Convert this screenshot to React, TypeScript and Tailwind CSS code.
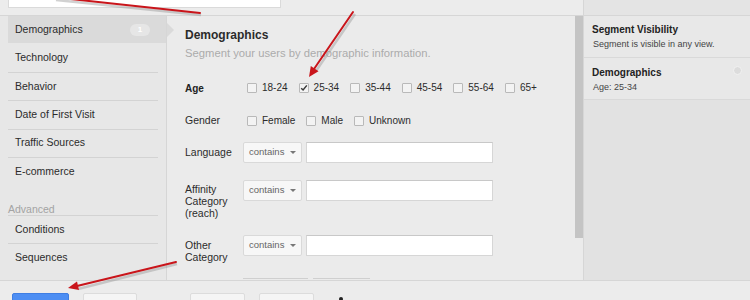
import React from "react";

const Checkbox = ({ checked = false }: { checked?: boolean }) => (
  <span className="relative inline-block w-[10px] h-[10px] shrink-0 rounded-[1px] border border-[#b9b9b9] bg-[#f3f3f3]">
    {checked && (
      <svg className="absolute left-[0px] top-[0px]" width="8" height="8" viewBox="0 0 8 8">
        <path d="M1.2 4.2 L3.1 6 L6.8 1.4" stroke="#3a3a3a" strokeWidth="1.5" fill="none" />
      </svg>
    )}
  </span>
);

const CheckItem = ({ label, checked = false }: { label: string; checked?: boolean }) => (
  <div className="flex items-center gap-[5px]">
    <Checkbox checked={checked} />
    <span className="text-[10px] leading-[14px] text-[#2b2b2b]">{label}</span>
  </div>
);

const SelectBox = () => (
  <div className="flex items-center justify-between w-[59px] h-[21px] rounded-[2px] border border-[#d9d9d9] bg-[#f7f7f7] pl-[5px] pr-[5px] shrink-0">
    <span className="text-[9.5px] text-[#666]">contains</span>
    <span className="w-0 h-0 border-l-[3px] border-r-[3px] border-t-[3px] border-l-transparent border-r-transparent border-t-[#777]" />
  </div>
);

const TextInput = () => (
  <div className="w-[187px] h-[21px] bg-white border border-[#d6d6d6] border-t-[#c8c8c8] shrink-0" />
);

const SideRow = ({ label, selected = false, badge }: { label: string; selected?: boolean; badge?: string }) => (
  <div className={`flex items-center justify-between h-[27.4px] pl-[7px] pr-[16px] ${selected ? "bg-[#dadada]" : ""}`}>
    <span className="text-[10.5px] text-[#2b2b2b]">{label}</span>
    {badge && (
      <span className="flex items-center justify-center w-[20px] h-[12px] rounded-full bg-[#e6e6e6] text-[8px] font-bold text-white">
        {badge}
      </span>
    )}
  </div>
);

const Sep = () => <div className="h-px bg-[#d3d3d3] mr-2" />;

export default function App() {
  return (
    <div className="relative w-[750px] h-[300px] overflow-hidden bg-[#ebebeb] font-['Liberation_Sans',Arial,sans-serif]">
      <div className="flex h-[280px]">
        {/* left area */}
        <div className="flex flex-col w-[583px]">
          <div className="h-[16px] bg-[#ececec] border-b border-[#d6d6d6] pl-2">
            <div className="w-[273px] h-[8px] bg-white border-x border-b border-[#dadada]" />
          </div>
          <div className="flex flex-1 min-h-0">
            {/* sidebar */}
            <div className="w-[167px] pl-2 bg-[#e7e7e7] border-r border-[#d6d6d6]">
              <SideRow label="Demographics" selected badge="1" />
              <div className="h-px" />
              <SideRow label="Technology" />
              <Sep />
              <SideRow label="Behavior" />
              <Sep />
              <SideRow label="Date of First Visit" />
              <Sep />
              <SideRow label="Traffic Sources" />
              <Sep />
              <SideRow label="E-commerce" />
              <div className="flex items-end h-[29.6px]">
                <span className="text-[10.5px] leading-[12px] text-[#a3a3a3]">Advanced</span>
              </div>
              <Sep />
              <SideRow label="Conditions" />
              <Sep />
              <SideRow label="Sequences" />
            </div>
            {/* main */}
            <div className="relative flex-1 bg-[#ebebeb] pl-[18px] pt-[12px]">
              <span className="absolute left-0 top-[7px] w-0 h-0 border-t-[7px] border-b-[7px] border-l-[7px] border-t-transparent border-b-transparent border-l-[#dadada]" />
              <div className="text-[12px] leading-[15px] font-bold text-[#2b2b2b]">Demographics</div>
              <div className="mt-[3px] text-[11.25px] leading-[14px] text-[#ababab]">
                Segment your users by demographic information.
              </div>
              <div className="flex items-center mt-[21px] h-[14px]">
                <span className="w-[62px] text-[10px] font-bold text-[#222]">Age</span>
                <div className="flex items-center gap-[11px]">
                  <CheckItem label="18-24" />
                  <CheckItem label="25-34" checked />
                  <CheckItem label="35-44" />
                  <CheckItem label="45-54" />
                  <CheckItem label="55-64" />
                  <CheckItem label="65+" />
                </div>
              </div>
              <div className="flex items-center mt-[19px] h-[14px]">
                <span className="w-[62px] text-[10.5px] text-[#2b2b2b]">Gender</span>
                <div className="flex items-center gap-[11px]">
                  <CheckItem label="Female" />
                  <CheckItem label="Male" />
                  <CheckItem label="Unknown" />
                </div>
              </div>
              <div className="flex items-center mt-[14px]">
                <span className="w-[58px] text-[10.5px] text-[#2b2b2b]">Language</span>
                <div className="flex gap-[4px]">
                  <SelectBox />
                  <TextInput />
                </div>
              </div>
              <div className="flex items-start mt-[17px]">
                <span className="w-[58px] mt-[3px] text-[10.5px] leading-[12px] text-[#2b2b2b]">
                  Affinity
                  <br />
                  Category
                  <br />
                  (reach)
                </span>
                <div className="flex gap-[4px]">
                  <SelectBox />
                  <TextInput />
                </div>
              </div>
              <div className="flex items-start mt-[16px]">
                <span className="w-[58px] mt-[4px] text-[10.5px] leading-[12px] text-[#2b2b2b]">
                  Other
                  <br />
                  Category
                </span>
                <div className="flex gap-[4px]">
                  <SelectBox />
                  <TextInput />
                </div>
              </div>
              <div className="flex gap-[5px] mt-[15px] ml-[58px]">
                <div className="w-[65px] h-[21px] border-t border-[#cfcfcf]" />
                <div className="w-[57px] h-[21px] border-t border-[#cfcfcf]" />
              </div>
            </div>
            {/* scrollbar */}
            <div className="w-[8px] bg-[#ebebeb]">
              <div className="h-[222px] bg-[#c4c4c4]" />
            </div>
          </div>
        </div>
        {/* right panel */}
        <div className="flex-1 flex flex-col bg-[#e2e2e2] border-l border-[#d6d6d6]">
          <div className="h-[16px] bg-[#e4e4e4] border-b border-[#d6d6d6]" />
          <div className="h-[42px] bg-[#e8e8e8] border-b border-[#d9d9d9] pl-2 pt-[7px]">
            <div className="text-[10px] leading-[14px] font-bold text-[#222]">Segment Visibility</div>
            <div className="text-[9px] leading-[14px] text-[#444] pl-px">Segment is visible in any view.</div>
          </div>
          <div className="relative h-[42px] bg-[#e8e8e8] border-b border-[#d9d9d9] pl-2 pt-[8px]">
            <div className="text-[10px] leading-[14px] font-bold text-[#222]">Demographics</div>
            <div className="text-[9px] leading-[14px] text-[#444] pl-px">Age: 25-34</div>
            <span className="absolute right-[8px] top-[8px] w-[9px] h-[9px] rounded-full bg-[#dcdcdc] border border-[#f2f2f2]" />
          </div>
        </div>
      </div>
      {/* bottom bar */}
      <div className="relative h-[20px] bg-[#ececec] border-t border-[#d6d6d6] flex items-start pt-[12px] pl-[12px]">
        <div className="w-[57px] h-[20px] bg-[#4d8ef3] border border-[#3f7ee3] rounded-[2px]" />
        <div className="ml-[14px] w-[54px] h-[20px] bg-[#f5f5f5] border border-[#dcdcdc] rounded-[2px]" />
        <div className="ml-[53px] w-[55px] h-[20px] bg-[#f5f5f5] border border-[#dcdcdc] rounded-[2px]" />
        <div className="ml-[14px] w-[55px] h-[20px] bg-[#f5f5f5] border border-[#dcdcdc] rounded-[2px]" />
        <span className="ml-[25px] mt-[4px] w-[4px] h-[4px] rounded-full bg-[#222]" />
      </div>
      {/* arrows */}
      <svg className="absolute inset-0 pointer-events-none" width="750" height="300" viewBox="0 0 750 300">
        <g stroke="#9a9a9a" strokeOpacity="0.45" strokeWidth="2.5" fill="none">
          <line x1="201" y1="15" x2="56" y2="0" />
          <line x1="355" y1="14" x2="316" y2="71" />
          <line x1="177" y1="264" x2="78" y2="289" />
        </g>
        <g stroke="#c9151b" strokeWidth="2" fill="none" strokeLinecap="round">
          <line x1="200" y1="13" x2="52" y2="-3" />
          <line x1="353" y1="12" x2="314" y2="69" />
          <line x1="176" y1="262" x2="77" y2="286" />
        </g>
        <g fill="#c9151b">
          <polygon points="309,77 318.5,71.2 310.8,66" />
          <polygon points="68,288 79,290 77,281.5" />
        </g>
      </svg>
    </div>
  );
}
